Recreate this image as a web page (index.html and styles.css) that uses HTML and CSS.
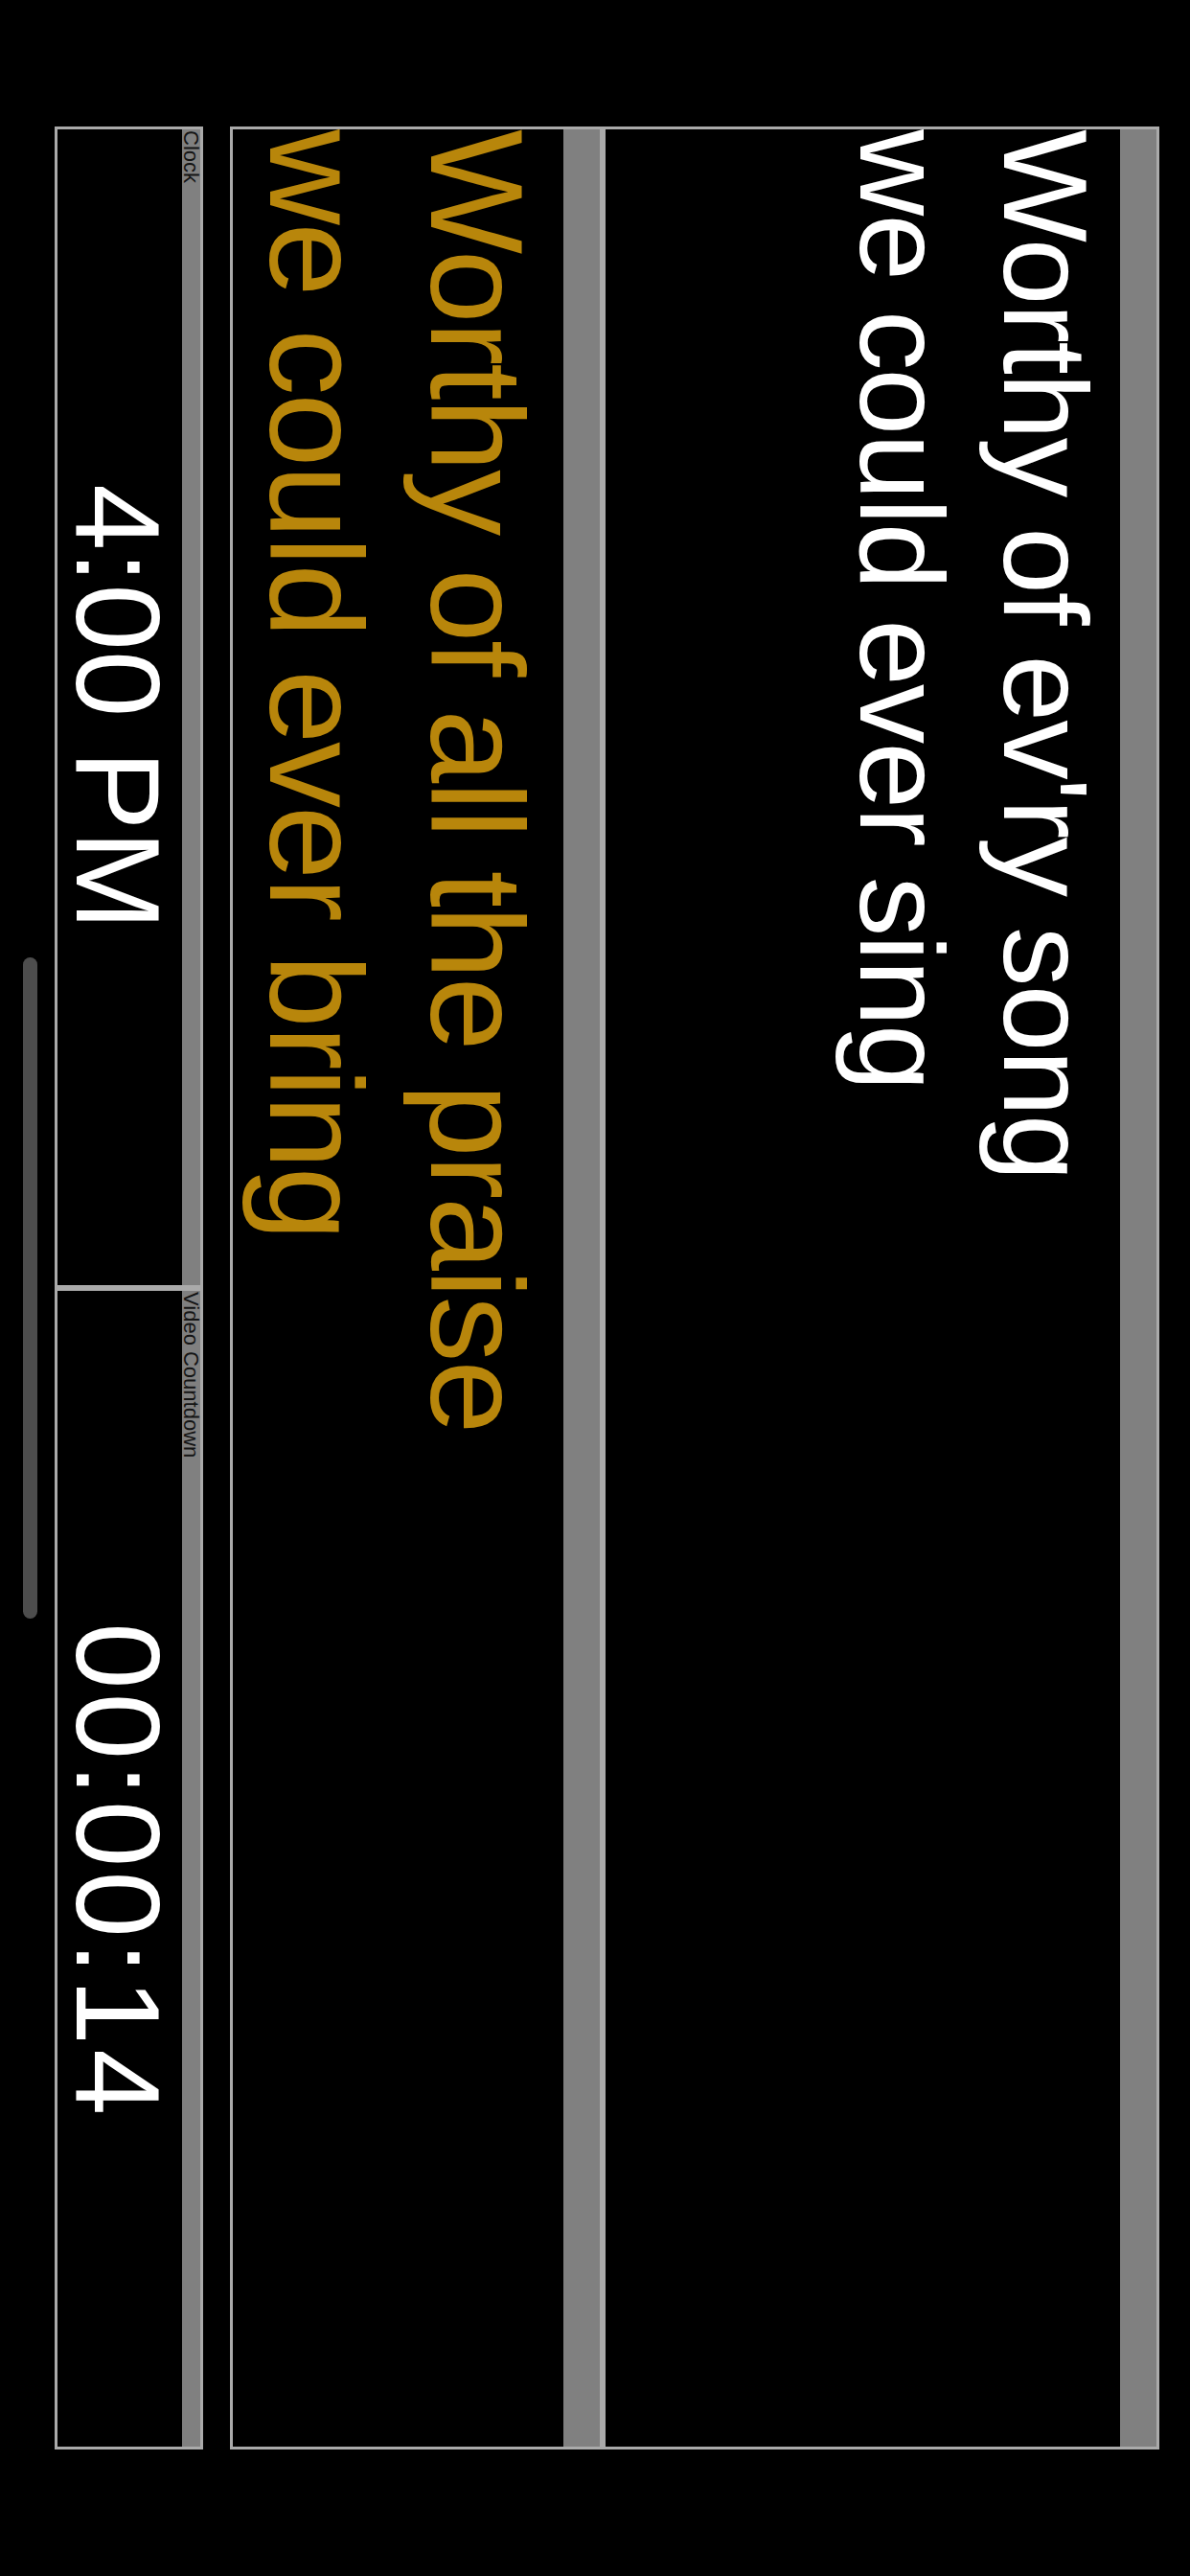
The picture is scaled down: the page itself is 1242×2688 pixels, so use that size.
FILE: index.html
```html
<!DOCTYPE html>
<html lang="en">
<head>
<meta charset="utf-8">
<title>Stage Display</title>
<link rel="stylesheet" href="styles.css">
</head>
<body>
<div class="stage">
  <section class="panel panel-next">
    <div class="panel-bar"></div>
    <div class="lyrics lyrics-next">Worthy of ev'ry song<br>we could ever sing</div>
  </section>
  <section class="panel panel-current">
    <div class="panel-bar"></div>
    <div class="lyrics lyrics-current">Worthy of all the praise<br>we could ever bring</div>
  </section>
  <div class="timers">
    <section class="panel timer">
      <div class="panel-bar panel-bar-small">Clock</div>
      <div class="timer-value">4:00 PM</div>
    </section>
    <section class="panel timer">
      <div class="panel-bar panel-bar-small">Video Countdown</div>
      <div class="timer-value countdown">00:00:14</div>
    </section>
  </div>
  <div class="home-indicator"></div>
</div>
</body>
</html>
```

FILE: styles.css
```css
html, body {
  margin: 0;
  padding: 0;
  background: #000;
}

body {
  width: 1242px;
  height: 2688px;
  overflow: hidden;
  font-family: "Liberation Sans", Arial, sans-serif;
}

/* The display is a landscape view shown a quarter turn clockwise:
   text runs top-to-bottom and blocks stack right-to-left. */
.stage {
  box-sizing: border-box;
  writing-mode: vertical-rl;
  text-orientation: sideways;
  width: 1242px;
  height: 2688px;
  padding-block-start: 32px;
  padding-inline: 132px;
  display: flex;
  flex-direction: column;
  background: #000;
}

.panel {
  box-sizing: border-box;
  border: 3px solid #aaaaaa;
  background: #000;
  display: flex;
  flex-direction: column;
}

.panel-next {
  block-size: 581px;
}

.panel-current {
  block-size: 389px;
}

.panel-bar {
  flex: none;
  block-size: 38px;
  background: #808080;
}

.panel-bar-small {
  block-size: 19px;
  font-size: 22px;
  line-height: 19px;
  color: #141414;
  white-space: nowrap;
  padding-inline-start: 1px;
}

.lyrics {
  white-space: nowrap;
  letter-spacing: -0.015em;
}

.lyrics-next {
  color: #ffffff;
  font-size: 125px;
  line-height: 150px;
  padding-block-start: 3px;
}

.lyrics-current {
  color: #b8860b;
  font-size: 138px;
  line-height: 168px;
  padding-block-start: 6px;
}

.timers {
  flex: none;
  margin-block-start: 28px;
  block-size: 155px;
  display: flex;
}

.timer {
  flex: 1 1 0;
}

.timer-value {
  flex: 1;
  display: flex;
  align-items: center;
  justify-content: center;
  color: #ffffff;
  font-size: 125px;
  line-height: 126px;
  white-space: nowrap;
  padding-block-start: 4px;
}

.countdown {
  letter-spacing: 4px;
  padding-inline-start: 4px;
}

.home-indicator {
  flex: none;
  inline-size: 690px;
  block-size: 15px;
  margin-block-start: 18px;
  margin-inline: auto;
  border-radius: 8px;
  background: #4d4d4d;
}
```
